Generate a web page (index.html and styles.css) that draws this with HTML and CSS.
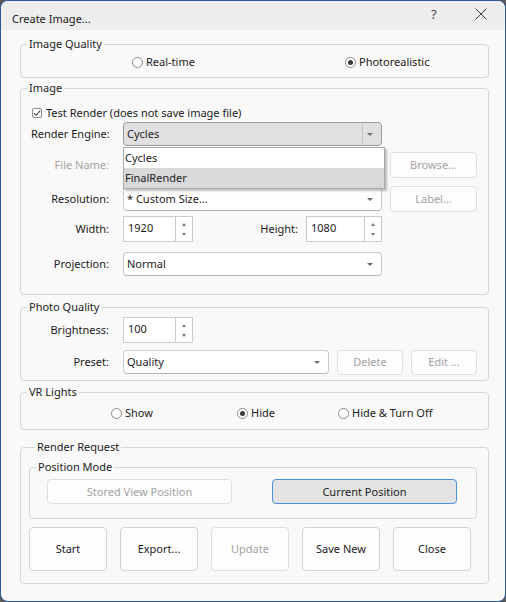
FILE: index.html
```html
<!DOCTYPE html>
<html lang="en">
<head>
    <meta charset="UTF-8">
    <title>Create Image...</title>
    <link rel="stylesheet" href="styles.css">
</head>
<body>
<div class="window">
    <div class="titlebar">
        <span class="title">Create Image...</span>
        <span class="help">?</span>
        <svg class="close" width="12" height="12" viewBox="0 0 12 12">
            <path d="M0.5 0.5 L11.5 11.5 M11.5 0.5 L0.5 11.5" stroke="#3a3a3a" stroke-width="1" fill="none"/>
        </svg>
    </div>

    <div class="content">
        <!-- Image Quality -->
        <fieldset class="group g-quality">
            <legend>Image Quality</legend>
            <div class="radio-row quality-row">
                <div class="radio q1"><span class="circle"></span>Real-time</div>
                <div class="radio checked"><span class="circle"></span>Photorealistic</div>
            </div>
        </fieldset>

        <!-- Image -->
        <fieldset class="group g-image">
            <legend>Image</legend>
            <div class="row row-check">
                <span class="checkbox">
                    <svg width="10" height="10" viewBox="0 0 10 10">
                        <path d="M2 5.2 L4.1 7.3 L8.2 2.6" stroke="#444" stroke-width="1.1" fill="none"/>
                    </svg>
                </span>
                Test Render (does not save image file)
            </div>
            <div class="row row-engine">
                <span class="lbl">Render Engine:</span>
                <div class="combo open">
                    <span class="combo-text">Cycles</span>
                    <span class="arrow"></span>
                    <div class="dropdown">
                        <div class="item">Cycles</div>
                        <div class="item hover">FinalRender</div>
                    </div>
                </div>
            </div>
            <div class="row row-file">
                <span class="lbl disabled">File Name:</span>
                <div class="combo field-disabled"></div>
                <button class="btn side disabled">Browse...</button>
            </div>
            <div class="row row-res">
                <span class="lbl">Resolution:</span>
                <div class="combo">
                    <span class="combo-text">* Custom Size...</span>
                    <span class="arrow"></span>
                </div>
                <button class="btn side disabled">Label...</button>
            </div>
            <div class="row row-size">
                <span class="lbl">Width:</span>
                <div class="spin w-spin">
                    <span class="spin-text">1920</span>
                    <span class="spin-btns"><span class="up"></span><span class="down"></span></span>
                </div>
                <span class="lbl-height">Height:</span>
                <div class="spin h-spin">
                    <span class="spin-text">1080</span>
                    <span class="spin-btns"><span class="up"></span><span class="down"></span></span>
                </div>
            </div>
            <div class="row row-proj">
                <span class="lbl">Projection:</span>
                <div class="combo">
                    <span class="combo-text">Normal</span>
                    <span class="arrow"></span>
                </div>
            </div>
        </fieldset>

        <!-- Photo Quality -->
        <fieldset class="group g-photo">
            <legend>Photo Quality</legend>
            <div class="row row-bright">
                <span class="lbl">Brightness:</span>
                <div class="spin w-spin">
                    <span class="spin-text">100</span>
                    <span class="spin-btns"><span class="up"></span><span class="down"></span></span>
                </div>
            </div>
            <div class="row row-preset">
                <span class="lbl">Preset:</span>
                <div class="combo preset">
                    <span class="combo-text">Quality</span>
                    <span class="arrow"></span>
                </div>
                <button class="btn small disabled">Delete</button>
                <button class="btn small disabled">Edit ...</button>
            </div>
        </fieldset>

        <!-- VR Lights -->
        <fieldset class="group g-vr">
            <legend>VR Lights</legend>
            <div class="radio-row vr-row">
                <div class="radio v1"><span class="circle"></span>Show</div>
                <div class="radio v2 checked"><span class="circle"></span>Hide</div>
                <div class="radio"><span class="circle"></span>Hide &amp; Turn Off</div>
            </div>
        </fieldset>

        <!-- Render Request -->
        <fieldset class="group g-request">
            <legend>Render Request</legend>
            <fieldset class="group g-position">
                <legend>Position Mode</legend>
                <div class="position-row">
                    <button class="btn pos disabled">Stored View Position</button>
                    <button class="btn pos current">Current Position</button>
                </div>
            </fieldset>
            <div class="actions">
                <button class="btn action">Start</button>
                <button class="btn action">Export...</button>
                <button class="btn action disabled">Update</button>
                <button class="btn action">Save New</button>
                <button class="btn action">Close</button>
            </div>
        </fieldset>
    </div>
</div>
</body>
</html>
```

FILE: styles.css
```css
body {
    margin: 0;
    background: #5a5a5a;
    font-family: "Noto Sans", "Open Sans", sans-serif;
    font-size: 11px;
    line-height: 16px;
    color: #1b1b1b;
}

.window {
    box-sizing: border-box;
    width: 506px;
    height: 602px;
    border: 1px solid #2b5a9e;
    border-radius: 8px;
    background: #f9f9f9;
    overflow: hidden;
}

/* title bar */
.titlebar {
    height: 29px;
    background: #eeeeee;
    display: flex;
    align-items: center;
    padding: 6px 0 0 11px;
    box-sizing: border-box;
    position: relative;
}

.help {
    position: absolute;
    left: 430px;
    top: 5px;
    font-size: 13px;
    color: #444;
}

.close {
    position: absolute;
    left: 474px;
    top: 7px;
}

.content {
    padding: 6px 16px 0 19px;
}

/* group boxes */
.group {
    margin: 0;
    padding: 0;
    border: 1px solid #d6d6d6;
    border-radius: 4px;
    min-width: 0;
}

.group legend {
    margin-left: 6px;
    padding: 0 2px;
    line-height: 16px;
}

.g-quality { padding-bottom: 5px; }
.g-image { margin-top: 2px; padding-bottom: 18px; }
.g-photo { margin-top: 4px; padding-bottom: 5px; }
.g-vr { margin-top: 3px; padding-bottom: 6px; }
.g-request { margin-top: 9px; padding: 0 11px 12px 8px; }
.g-position { margin-top: 4px; padding-bottom: 14px; }

/* radios */
.radio-row {
    display: flex;
    align-items: center;
    height: 20px;
}

.vr-row { margin-top: 3px; }

.radio {
    display: flex;
    align-items: center;
    gap: 3px;
}

.circle {
    width: 11px;
    height: 11px;
    box-sizing: border-box;
    border: 1px solid #8a8a8a;
    border-radius: 50%;
    background: #fff;
    display: flex;
    align-items: center;
    justify-content: center;
}

.radio.checked .circle::after {
    content: "";
    width: 5px;
    height: 5px;
    border-radius: 50%;
    background: #3a3a3a;
}

.q1 { margin-left: 111px; width: 213px; }
.v1 { margin-left: 90px; width: 126px; }
.v2 { width: 101px; }

/* form rows */
.row {
    display: flex;
    align-items: center;
    padding-left: 10px;
}

.lbl {
    width: 78px;
    margin-right: 14px;
    text-align: right;
    white-space: nowrap;
}

.disabled { color: #a3a3a3; }

.row-check {
    height: 18px;
    margin-top: 8px;
    padding-left: 11px;
}

.checkbox {
    width: 10px;
    height: 10px;
    box-sizing: border-box;
    border: 1px solid #8a8a8a;
    border-radius: 2px;
    background: #fff;
    margin-right: 4px;
    display: flex;
    align-items: center;
    justify-content: center;
}

.checkbox svg { display: block; margin: -1px; }

.row-engine { height: 24px; margin-top: 0; }
.row-file { height: 26px; margin-top: 6px; }
.row-res { height: 26px; margin-top: 8px; }
.row-size { height: 26px; margin-top: 4px; }
.row-proj { height: 24px; margin-top: 10px; }
.row-bright { height: 26px; margin-top: 2px; }
.row-preset { height: 26px; margin-top: 6px; }

/* combo boxes */
.combo {
    position: relative;
    box-sizing: border-box;
    width: 259px;
    height: 24px;
    border: 1px solid #cbcbcb;
    border-bottom-color: #b5b5b5;
    border-radius: 4px;
    background: #fff;
    display: flex;
    align-items: center;
    padding-left: 3px;
}

.combo.preset { width: 206px; }

.combo.open {
    background: #e0e0e0;
    border-color: #9a9a9a;
}

.combo.open::before {
    content: "";
    position: absolute;
    right: 18px;
    top: 0;
    bottom: 0;
    border-left: 1px solid #c4c4c4;
}

.field-disabled { border-color: #e2e2e2; }

.arrow {
    position: absolute;
    right: 8px;
    top: 10px;
    border-left: 3px solid transparent;
    border-right: 3px solid transparent;
    border-top: 3px solid #6a6a6a;
}

.dropdown {
    position: absolute;
    left: -1px;
    top: 24px;
    width: 260px;
    background: #fff;
    border: 1px solid #a8a8a8;
    box-shadow: 2px 2px 2px rgba(0, 0, 0, 0.25);
    z-index: 2;
}

.dropdown .item {
    height: 20px;
    line-height: 20px;
    padding-left: 1px;
}

.dropdown .item.hover { background: #d9d9d9; }

/* spin boxes */
.spin {
    position: relative;
    box-sizing: border-box;
    height: 26px;
    border: 1px solid #cbcbcb;
    background: #fff;
    display: flex;
}

.w-spin { width: 70px; }
.h-spin { width: 76px; }

.spin-text {
    flex: 1;
    padding: 3px 0 0 4px;
}

.spin-btns {
    width: 16px;
    border-left: 1px solid #cbcbcb;
    position: relative;
}

.spin-btns .up,
.spin-btns .down {
    position: absolute;
    left: 6px;
    border-left: 2.5px solid transparent;
    border-right: 2.5px solid transparent;
}

.spin-btns .up { top: 6px; border-bottom: 3px solid #777; }
.spin-btns .down { top: 16px; border-top: 3px solid #777; }

.lbl-height {
    width: 105px;
    margin-right: 8px;
    text-align: right;
}

/* buttons */
.btn {
    box-sizing: border-box;
    font: inherit;
    color: #1b1b1b;
    background: #fdfdfd;
    border: 1px solid #d2d2d2;
    border-radius: 4px;
    padding: 0;
}

.btn.disabled {
    color: #a3a3a3;
    border-color: #e0e0e0;
}

.btn.side { width: 87px; height: 26px; margin-left: 8px; }
.btn.small { width: 66px; height: 25px; margin-left: 8px; }

.position-row {
    display: flex;
    gap: 40px;
    margin-top: 4px;
    padding-left: 17px;
}

.btn.pos { width: 185px; height: 25px; }

.btn.current {
    background: #e3e3e3;
    border-color: #4c8fde;
}

.actions {
    display: flex;
    gap: 13px;
    margin-top: 8px;
}

.btn.action { width: 78px; height: 44px; }
```
